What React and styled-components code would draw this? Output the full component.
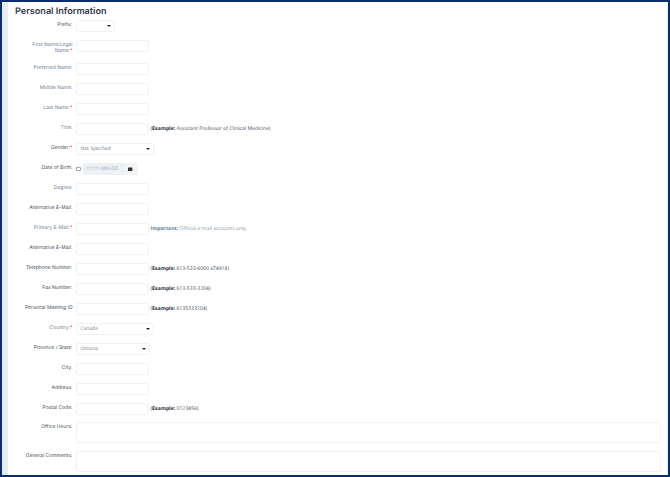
import React from "react";
import styled, { createGlobalStyle } from "styled-components";

const Global = createGlobalStyle`
  html, body { margin: 0; padding: 0; height: 100%; background: #fff; overflow: hidden; }
  #root { height: 100%; }
  * { box-sizing: border-box; }
`;
const Frame = styled.div`
  width: 670px; height: 477px; overflow: hidden;
  border: solid #0b2e6f; border-width: 2.5px 2px 2.5px 2.5px;
  background: #e6ecf3;
  padding: 0 1px 0 5.5px;
  display: flex;
  font-family: Inter, "Liberation Sans", sans-serif;
  text-rendering: geometricPrecision;
`;
const Content = styled.main`
  flex: 1; background: #fff; padding: 3.7px 6px 0 7.5px; overflow: hidden;
`;
const Title = styled.h1`
  margin: 0 0 2.4px; font-size: 9.1px; line-height: 11.5px; font-weight: 600; color: #2f3a4a;
`;
const Form = styled.div`display: flex; flex-direction: column; gap: 7.5px;`;
const Row = styled.div`
  display: grid; grid-template-columns: 57.5px 1fr; column-gap: 3.5px; align-items: start;
  min-height: ${p => p.$h || 12.5}px;
  margin-top: ${p => p.$pull ? -1 : 0}px;
`;
const Label = styled.label`
  text-align: right; font-size: 5px; line-height: 6.4px; padding-top: 2px;
  color: ${p => p.$muted ? "#6f8299" : "#465160"};
`;
const Star = styled.span`color: #e0405a;`;
const Field = styled.div`display: flex; align-items: center; gap: 1.5px; min-width: 0;`;
const Text = styled.input`
  width: 73px; height: 12.5px; border: 1px solid #f0f1f3; border-radius: 1.5px; background: #fff;
  padding: 0; margin: 0; flex: none; outline: none;
`;
const Area = styled.textarea`
  display: block; width: 100%; height: ${p => p.$h}px; border: 1px solid #f0f1f3; border-radius: 1.5px;
  background: #fff; resize: none; padding: 0; margin: 0; outline: none;
`;
const SelectBox = styled.div`
  position: relative; width: ${p => p.$w}px; height: 12.5px; border: 1px solid #f0f1f3; border-radius: 1.5px;
  background: #fff; display: flex; align-items: center; padding-left: 3.5px;
  font-family: "Open Sans", sans-serif; font-size: 4.9px; color: #6d7a88;
  &::after {
    content: ""; position: absolute; right: 3px; top: 4.6px;
    border: solid transparent; border-width: 2.2px 2px 0; border-top-color: #222;
  }
`;
const Hint = styled.span`
  font-size: 5.1px; color: ${p => p.$muted ? "#8596a8" : "#414a54"}; white-space: nowrap;
  font-family: "Open Sans", sans-serif;
  b { font-weight: 700; color: ${p => p.$muted ? "#66809a" : "#2a2f36"}; }
`;
const Check = styled.input.attrs({ type: "checkbox" })`
  width: 4.6px; height: 4.6px; margin: 0 .4px 0 .2px; appearance: none; border: 1px solid #a8a8a8;
  border-radius: .8px; background: #fff; flex: none;
`;
const DateGroup = styled.div`display: flex; height: 12.5px; border-radius: 1.5px; overflow: hidden;`;
const DateText = styled.div`
  width: 39px; background: #edf1f5; color: #a3afbc; font-size: 4.7px; display: flex; align-items: center; padding-left: 3.5px;
`;
const DateBtn = styled.div`
  width: 16.5px; background: #f1f4f7; border-left: 1px solid #e7ebef; display: flex; align-items: center; justify-content: center;
`;
const Cal = styled.svg`width: 4.4px; height: 4.4px; display: block;`;

const rows = [
  { label: "Prefix:", select: 39 },
  { label: <>First Name/Legal<br />Name:<Star>*</Star></>, h: 15.5, muted: true },
  { label: "Preferred Name:", muted: true },
  { label: "Middle Name:", muted: true },
  { label: <>Last Name:<Star>*</Star></>, muted: true },
  { label: "Title:", muted: true, ex: "Assistant Professor of Clinical Medicine" },
  { label: <>Gender:<Star>*</Star></>, select: 78, value: "Not Specified" },
  { label: "Date of Birth:", date: true },
  { label: "Degree:", muted: true },
  { label: "Alternative E-Mail:" },
  { label: <>Primary E-Mail:<Star>*</Star></>, muted: true, important: true },
  { label: "Alternative E-Mail:" },
  { label: "Telephone Number:", ex: "613-533-6000 x74918" },
  { label: "Fax Number:", ex: "613-533-3204" },
  { label: "Personal Meeting ID", ex: "6135333204" },
  { label: <>Country:<Star>*</Star></>, select: 78, value: "Canada", muted: true },
  { label: "Province / State:", select: 74, value: "Ontario" },
  { label: "City:" },
  { label: "Address:" },
  { label: "Postal Code:", ex: "0123456" },
  { label: "Office Hours:", area: 21.5, pull: true },
  { label: "General Comments:", area: 21.5 },
];

function Control({ r }) {
  if (r.area) return <Area $h={r.area} />;
  if (r.select) return <SelectBox $w={r.select}>{r.value}</SelectBox>;
  if (r.date) return (
    <Field>
      <Check />
      <DateGroup>
        <DateText>YYYY-MM-DD</DateText>
        <DateBtn><Cal viewBox="0 0 8 8"><path fill="#333" d="M0 1h8v7H0z" /></Cal></DateBtn>
      </DateGroup>
    </Field>
  );
  return (
    <Field>
      <Text />
      {r.ex && <Hint>(<b>Example:</b> {r.ex})</Hint>}
      {r.important && <Hint $muted><b>Important:</b> Official e-mail accounts only.</Hint>}
    </Field>
  );
}

export default function App() {
  return (
    <>
      <Global />
      <Frame>
        <Content>
          <Title>Personal Information</Title>
          <Form>
            {rows.map((r, i) => (
              <Row key={i} $h={r.h} $pull={r.pull}>
                <Label $muted={r.muted}>{r.label}</Label>
                <Control r={r} />
              </Row>
            ))}
          </Form>
        </Content>
      </Frame>
    </>
  );
}
